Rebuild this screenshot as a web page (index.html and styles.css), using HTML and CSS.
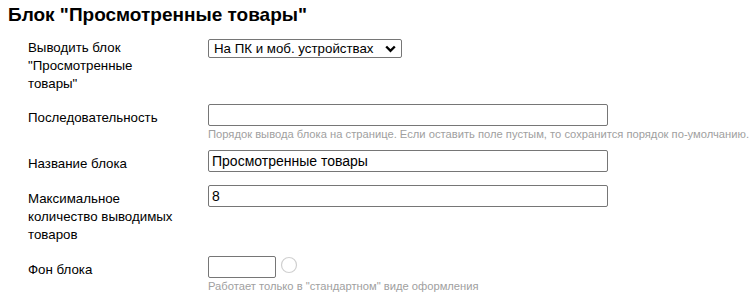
FILE: index.html
```html
<!DOCTYPE html>
<html lang="ru">
<head>
<meta charset="utf-8">
<link rel="stylesheet" href="styles.css">
</head>
<body>
<div class="page">
  <h1 class="title">Блок "Просмотренные товары"</h1>
  <div class="form">
    <div class="row row-first">
      <div class="label label-first">Выводить блок "Просмотренные товары"</div>
      <div class="field">
        <div class="select">
          <span class="select-text">На ПК и моб. устройствах</span>
          <svg class="chevron" width="11" height="8" viewBox="0 0 11 8"><path d="M1.2 1.5 L5.5 5.8 L9.8 1.5" fill="none" stroke="#000" stroke-width="2.4"/></svg>
        </div>
      </div>
    </div>
    <div class="row row-hint">
      <div class="label">Последовательность</div>
      <div class="field">
        <div class="input"></div>
        <div class="hint">Порядок вывода блока на странице. Если оставить поле пустым, то сохранится порядок по-умолчанию.</div>
      </div>
    </div>
    <div class="row">
      <div class="label">Название блока</div>
      <div class="field">
        <div class="input">Просмотренные товары</div>
      </div>
    </div>
    <div class="row">
      <div class="label">Максимальное количество выводимых товаров</div>
      <div class="field">
        <div class="input">8</div>
      </div>
    </div>
    <div class="row">
      <div class="label">Фон блока</div>
      <div class="field">
        <div class="color-line">
          <div class="input input-color"></div>
          <svg class="swatch" width="18" height="18" viewBox="0 0 18 18"><circle cx="9" cy="9" r="7.5" fill="#fff" stroke="#d0d0d0" stroke-width="1.2"/></svg>
        </div>
        <div class="hint">Работает только в "стандартном" виде оформления</div>
      </div>
    </div>
  </div>
</div>
</body>
</html>
```
FILE: styles.css
```css
html, body {
  margin: 0;
  padding: 0;
  background: #fff;
}
.page {
  padding: 5px 8px 0 8px;
  font-family: "Liberation Sans", Arial, sans-serif;
  color: #000;
}
.title {
  margin: 0;
  font-size: 19px;
  line-height: 20px;
  font-weight: bold;
}
.form {
  margin-top: 14px;
  padding-left: 20px;
}
.row {
  display: flex;
  align-items: flex-start;
  margin-bottom: 12px;
}
.row-first {
  margin-bottom: 11px;
}
.row-hint {
  margin-bottom: 9px;
}
.label {
  width: 180px;
  flex: none;
  font-size: 13.3px;
  line-height: 18px;
  padding-top: 5px;
  box-sizing: border-box;
  padding-right: 28px;
}
.label-first {
  padding-top: 0;
}
.field {
  display: flex;
  flex-direction: column;
}
.select {
  width: 194px;
  height: 19px;
  box-sizing: border-box;
  border: 1px solid #767676;
  border-radius: 2px;
  display: flex;
  align-items: center;
  justify-content: space-between;
  padding: 0 5px 0 5px;
  font-size: 13.3px;
}
.chevron {
  display: block;
}
.input {
  width: 400px;
  height: 22px;
  box-sizing: border-box;
  border: 1px solid #767676;
  border-radius: 2px;
  font-size: 14px;
  line-height: 20px;
  padding: 0 3px;
}
.input-color {
  width: 68px;
}
.color-line {
  display: flex;
  align-items: flex-start;
  gap: 4px;
}
.swatch {
  display: block;
}
.hint {
  font-size: 11.2px;
  line-height: 14px;
  color: #a0a0a0;
  margin-top: 1px;
  white-space: nowrap;
}
```
